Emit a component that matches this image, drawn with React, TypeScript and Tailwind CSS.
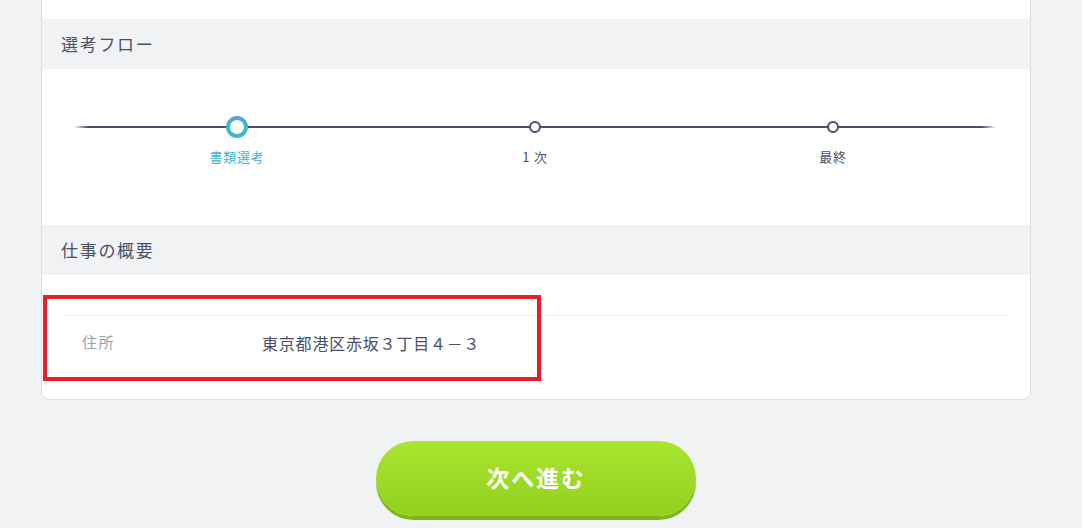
import React from "react";

const font = { fontFamily: '"Noto Sans CJK JP", "Noto Sans", sans-serif' };

function Step({ label, active }: { label: string; active?: boolean }) {
  return (
    <div className="flex flex-col items-center">
      <div className="flex h-[24px] w-[24px] items-center justify-center">
        {active ? (
          <svg width="24" height="24" viewBox="0 0 24 24">
            <defs>
              <linearGradient id="ring" x1="0" y1="0" x2="0" y2="1">
                <stop offset="0" stopColor="#5a9ee6" />
                <stop offset="0.45" stopColor="#3db6d2" />
                <stop offset="1" stopColor="#3cb8cf" />
              </linearGradient>
            </defs>
            <circle cx="12" cy="12" r="9" fill="#fff" stroke="url(#ring)" strokeWidth="4" />
          </svg>
        ) : (
          <svg width="14" height="14" viewBox="0 0 14 14">
            <circle cx="7" cy="7" r="5" fill="#fff" stroke="#4a5068" strokeWidth="2" />
          </svg>
        )}
      </div>
      <div
        className={`mt-[8px] text-[13px] leading-[20px] tracking-[0.06em] ${active ? "text-[#3cb4cf]" : "text-[#4a4f66]"}`}
      >
        {label}
      </div>
    </div>
  );
}

export default function App() {
  return (
    <div className="min-h-[528px] w-full bg-[#f1f2f4]" style={font}>
      <div className="ml-[41px] w-[990px] overflow-hidden rounded-b-[8px] border-x border-b border-[#dcdee3] bg-white">
        <div className="h-[19px]" />
        <div className="flex h-[50px] items-center bg-[#f1f2f4] pl-[19px] text-[17px] tracking-[0.1em] text-[#4a4f66]">
          選考フロー
        </div>
        <div className="h-[156px] pt-[46px] pl-[32px]">
          <div className="relative w-[922px] px-[14px]">
            <div className="absolute left-0 right-0 top-[11px] h-[2px] bg-[linear-gradient(to_right,rgba(74,80,104,0),#4a5068_14px,#4a5068_calc(100%-14px),rgba(74,80,104,0))]" />
            <div className="relative grid grid-cols-3">
              <Step label="書類選考" active />
              <Step label="1 次" />
              <Step label="最終" />
            </div>
          </div>
        </div>
        <div className="flex h-[50px] items-center bg-[#f1f2f4] pl-[19px] text-[17px] tracking-[0.1em] text-[#4a4f66]">
          仕事の概要
        </div>
        <div className="relative h-[124px] px-[20px] pt-[40px]">
          <div className="flex h-[54px] items-center border-t border-[#eeeff1]">
            <div className="w-[200px] pl-[20px] text-[15px] tracking-[0.1em] text-[#9a9fae]">住所</div>
            <div className="text-[16px] tracking-[0.05em] text-[#4a4f66]">東京都港区赤坂３丁目４－３</div>
          </div>
          <div className="pointer-events-none absolute left-[1px] top-[20px] h-[86px] w-[498px] border-[4px] border-[#e3202b]" />
        </div>
      </div>
      <div className="ml-[41px] flex w-[990px] justify-center pt-[41px]">
        <button className="flex h-[75px] w-[320px] items-center justify-center rounded-full bg-[linear-gradient(to_bottom,#a8e630,#92d01e)] pb-[3px] text-[23px] font-bold tracking-[0.08em] text-white shadow-[0_4px_0_#7fb51a]">
          次へ進む
        </button>
      </div>
    </div>
  );
}
